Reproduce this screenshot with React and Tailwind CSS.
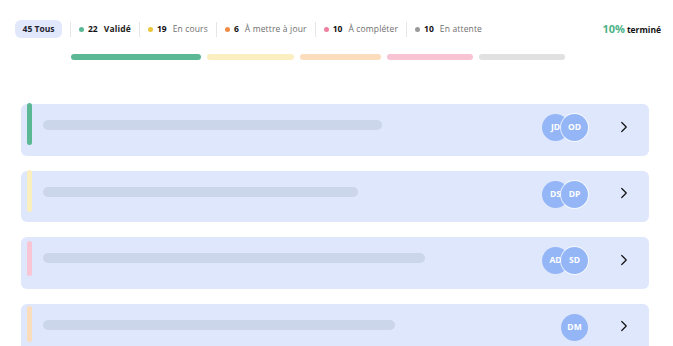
import { ChevronRight } from "lucide-react";

const stats = [
  { n: "22", label: "Validé", dot: "bg-[#5ab894]", bold: true },
  { n: "19", label: "En cours", dot: "bg-[#e8c63a]" },
  { n: "6", label: "À mettre à jour", dot: "bg-[#f08c45]" },
  { n: "10", label: "À compléter", dot: "bg-[#ee7fa0]" },
  { n: "10", label: "En attente", dot: "bg-[#9a9a9a]" },
];

const bars = [
  { w: "w-[130px]", c: "bg-[#5ab894]" },
  { w: "w-[87px]", c: "bg-[#fbefc2]" },
  { w: "w-[81px]", c: "bg-[#fbdcbd]" },
  { w: "w-[86px]", c: "bg-[#f8c4d4]" },
  { w: "w-[86px]", c: "bg-[#e1e1e1]" },
];

const rows = [
  { accent: "bg-[#5ab894] -mt-px h-[42px]", line: "w-[339px]", people: ["JD", "OD"] },
  { accent: "bg-[#fbefbe] -mt-px h-[42px]", line: "w-[315px]", people: ["DS", "DP"] },
  { accent: "bg-[#f9c5d4] mt-[4px] h-[35px]", line: "w-[382px]", people: ["AD", "SD"] },
  { accent: "bg-[#fbdcbb] mt-[2px] h-[36px]", line: "w-[352px]", people: ["DM"] },
];

function Avatar({ text, first }) {
  return (
    <div
      className={
        "w-[27px] h-[27px] rounded-full bg-[#95b6f6] flex items-center justify-center text-white text-[8.5px] font-bold overflow-hidden " +
        (first ? "" : "-ml-[8px] ring-1 ring-white/70")
      }
    >
      {text}
    </div>
  );
}

export default function App() {
  return (
    <div
      className="w-[673px] h-[346px] overflow-hidden bg-white"
      style={{ fontFamily: "'Open Sans', 'Liberation Sans', sans-serif" }}
    >
      <div className="flex items-center h-[18px] mt-[20px] pl-[15px] pr-[12px]">
        <div className="h-[18px] w-[47px] rounded-[6px] bg-[#e1e8fb] flex items-center justify-center text-[8.5px] font-bold text-[#1f2330]">
          45 Tous
        </div>
        <div className="flex items-center ml-[8px]">
          {stats.map((s, i) => (
            <div key={i} className="flex items-center border-l border-[#e6e6e6] h-[15px] px-[8px]">
              <span className={"w-[5px] h-[5px] rounded-full " + s.dot}></span>
              <span className="ml-[4px] text-[8.5px] font-bold text-[#111]">{s.n}</span>
              <span
                className={
                  "ml-[6px] text-[8.5px] tracking-[0.15px] " +
                  (s.bold ? "font-bold text-[#222]" : "text-[#6f6f6f]")
                }
              >
                {s.label}
              </span>
            </div>
          ))}
        </div>
        <div className="ml-auto flex items-baseline gap-[2px] font-bold">
          <span className="text-[11px] text-[#4cb388]">10%</span>
          <span className="text-[8.5px] text-[#111]">terminé</span>
        </div>
      </div>

      <div className="flex gap-[6px] ml-[71px] mt-[16px]">
        {bars.map((b, i) => (
          <div key={i} className={"h-[6px] rounded-full " + b.w + " " + b.c}></div>
        ))}
      </div>

      <div className="flex flex-col gap-[15px] ml-[21px] mr-[24px] mt-[44px]">
        {rows.map((r, i) => (
          <div key={i} className="h-[51.5px] shrink-0 rounded-[6px] bg-[#dee7fc] flex items-start pl-[6px] pr-[16px]">
            <div className={"w-[5px] rounded-full shrink-0 " + r.accent}></div>
            <div className={"h-[10px] rounded-full bg-[#cbd6ea] ml-[11px] mt-[16px] " + r.line}></div>
            <div className="ml-auto mt-[10px] flex items-center">
              <div className="flex items-center">
                {r.people.map((p, j) => (
                  <Avatar key={j} text={p} first={j === 0} />
                ))}
              </div>
              <ChevronRight className="ml-[27px] w-[18px] h-[18px] text-[#111] -mt-[2px]" strokeWidth={1.6} />
            </div>
          </div>
        ))}
      </div>
    </div>
  );
}
